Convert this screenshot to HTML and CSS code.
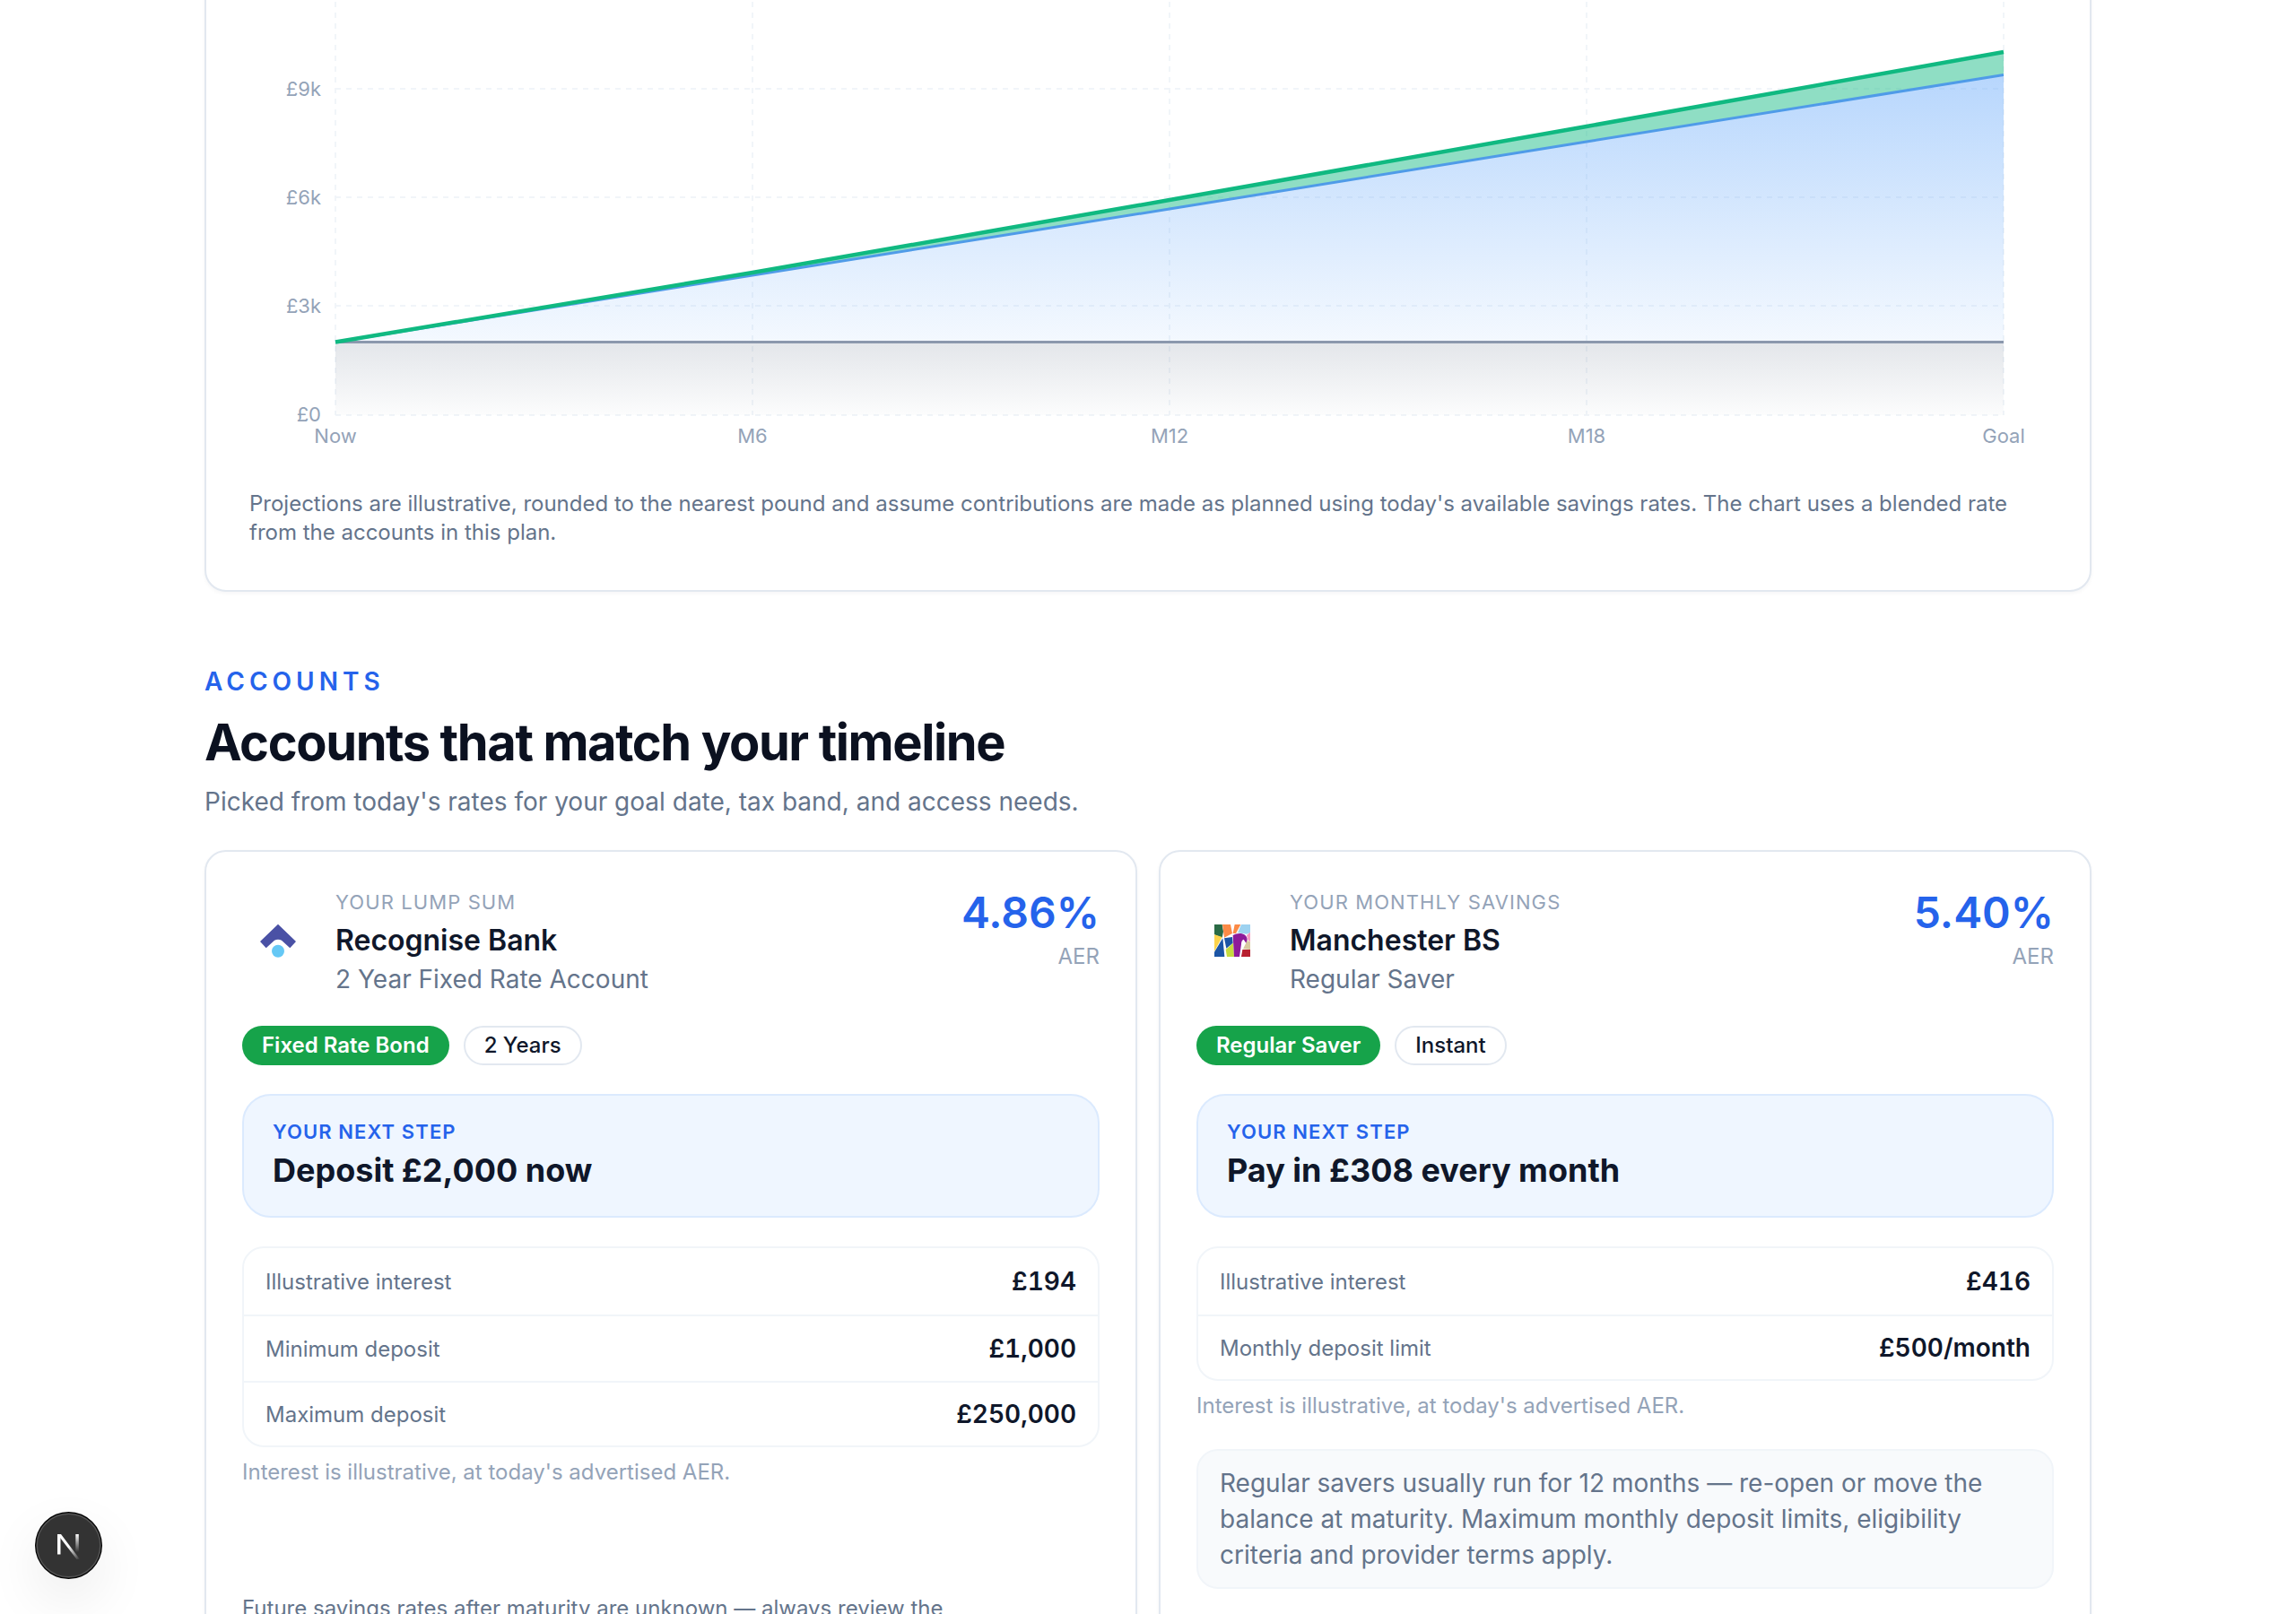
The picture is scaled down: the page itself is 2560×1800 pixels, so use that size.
FILE: index.html
```html
<!DOCTYPE html>
<html lang="en">
<head>
<meta charset="utf-8">
<title>Savings plan</title>
<link rel="stylesheet" href="styles.css">
</head>
<body>
<main class="page">
  <section class="card chart-card">
    <svg class="chart" viewBox="278 -22 2004 532" width="2004" height="532" aria-label="Projection chart">
      <defs>
        <linearGradient id="gBlue" x1="0" y1="0" x2="0" y2="1">
          <stop offset="0" stop-color="#60a5fa" stop-opacity=".45"/>
          <stop offset="1" stop-color="#60a5fa" stop-opacity=".07"/>
        </linearGradient>
        <linearGradient id="gGrey" x1="0" y1="0" x2="0" y2="1">
          <stop offset="0" stop-color="#64748b" stop-opacity=".18"/>
          <stop offset="1" stop-color="#64748b" stop-opacity=".02"/>
        </linearGradient>
      </defs>
      <g class="grid">
        <line x1="374" y1="99" x2="2234" y2="99"/>
        <line x1="374" y1="220" x2="2234" y2="220"/>
        <line x1="374" y1="341" x2="2234" y2="341"/>
        <line x1="374" y1="463" x2="2234" y2="463"/>
        <line x1="374" y1="-22" x2="374" y2="463"/>
        <line x1="839" y1="-22" x2="839" y2="463"/>
        <line x1="1304" y1="-22" x2="1304" y2="463"/>
        <line x1="1769" y1="-22" x2="1769" y2="463"/>
        <line x1="2234" y1="-22" x2="2234" y2="463"/>
      </g>
      <polygon points="374,381.500 2234,381.500 2234,463 374,463" fill="url(#gGrey)"/>
      <polygon points="374,381.500 839,307 1304,233 1769,158 2234,83.500 2234,381.500" fill="url(#gBlue)"/>
      <polygon points="374,381.500 839,304 1304,223 1769,141 2234,58 2234,83.500 1769,158 1304,233 839,307" fill="#10b981" fill-opacity=".47"/>
      <line class="line-grey" x1="374" y1="381.500" x2="2234" y2="381.500"/>
      <polyline class="line-blue" points="374,381.500 839,307 1304,233 1769,158 2234,83.500"/>
      <polyline class="line-green" points="374,381.500 839,304 1304,223 1769,141 2234,58"/>
      <g class="axis axis-y">
        <text x="358" y="107">£9k</text>
        <text x="358" y="228">£6k</text>
        <text x="358" y="349">£3k</text>
        <text x="358" y="470">£0</text>
      </g>
      <g class="axis axis-x">
        <text x="374" y="494">Now</text>
        <text x="839" y="494">M6</text>
        <text x="1304" y="494">M12</text>
        <text x="1769" y="494">M18</text>
        <text x="2234" y="494">Goal</text>
      </g>
    </svg>
    <p class="chart-note">Projections are illustrative, rounded to the nearest pound and assume contributions are made as planned using today's available savings rates. The chart uses a blended rate from the accounts in this plan.</p>
  </section>

  <section class="accounts">
    <header class="section-head">
      <div class="eyebrow">ACCOUNTS</div>
      <h2 class="section-title">Accounts that match your timeline</h2>
      <p class="section-sub">Picked from today's rates for your goal date, tax band, and access needs.</p>
    </header>

    <div class="account-grid">
      <article class="card account">
        <div class="acc-head">
          <div class="logo">
            <svg viewBox="0 0 80 80" width="80" height="80">
              <path d="M40 18.700 60 38 53.300 45.300 44 36.800Q40 34.500 36 36.800L26.700 45.300 20 38Z" fill="#4a51a5"/>
              <circle cx="40" cy="48.700" r="7" fill="#65c8f5"/>
            </svg>
          </div>
          <div class="acc-id">
            <div class="acc-kicker">YOUR LUMP SUM</div>
            <div class="acc-name">Recognise Bank</div>
            <div class="acc-product">2 Year Fixed Rate Account</div>
          </div>
          <div class="acc-rate">
            <div class="rate">4.86%</div>
            <div class="rate-unit">AER</div>
          </div>
        </div>
        <div class="pills">
          <span class="pill pill-green">Fixed Rate Bond</span>
          <span class="pill pill-outline">2 Years</span>
        </div>
        <div class="next">
          <div class="next-label">YOUR NEXT STEP</div>
          <div class="next-value">Deposit £2,000 now</div>
        </div>
        <div class="facts">
          <div class="fact"><span class="fact-k">Illustrative interest</span><span class="fact-v">£194</span></div>
          <div class="fact"><span class="fact-k">Minimum deposit</span><span class="fact-v">£1,000</span></div>
          <div class="fact"><span class="fact-k">Maximum deposit</span><span class="fact-v">£250,000</span></div>
        </div>
        <p class="fine">Interest is illustrative, at today's advertised AER.</p>
        <p class="foot">Future savings rates after maturity are unknown — always review the</p>
      </article>

      <article class="card account">
        <div class="acc-head">
          <div class="logo">
            <svg viewBox="0 0 80 80" width="80" height="80">
              <g transform="translate(20 19) scale(.3333)">
                <polygon points="0,0 26,0 30,24 26,44 0,34" fill="#2a6b45"/>
                <polygon points="0,34 26,42 0,90" fill="#fdd34a"/>
                <polygon points="0,92 28,46 34,108 0,108" fill="#1c55a5"/>
                <polygon points="27,0 54,0 60,30 33,44 30,20" fill="#fb8a46"/>
                <polygon points="68,0 88,0 72,30 62,30" fill="#fb8a46"/>
                <polygon points="90,0 120,0 120,28 108,32 78,28" fill="#9dd2f0"/>
                <polygon points="120,26 108,36 112,52 120,58" fill="#f59ac0"/>
                <polygon points="120,58 110,54 96,82 120,84" fill="#d8c9a0"/>
                <polygon points="94,84 120,84 120,108 90,108" fill="#b81f2f"/>
                <polygon points="33,46 60,42 62,62 40,80" fill="#1c55a5"/>
                <polygon points="38,84 63,62 66,108 42,108" fill="#c6db3f"/>
                <path d="M66 108 62 36C78 26 110 26 110 52L106 62 98 50C92 52 90 58 90 66L84 108Z" fill="#8e1a9a"/>
              </g>
            </svg>
          </div>
          <div class="acc-id">
            <div class="acc-kicker">YOUR MONTHLY SAVINGS</div>
            <div class="acc-name">Manchester BS</div>
            <div class="acc-product">Regular Saver</div>
          </div>
          <div class="acc-rate">
            <div class="rate">5.40%</div>
            <div class="rate-unit">AER</div>
          </div>
        </div>
        <div class="pills">
          <span class="pill pill-green">Regular Saver</span>
          <span class="pill pill-outline">Instant</span>
        </div>
        <div class="next">
          <div class="next-label">YOUR NEXT STEP</div>
          <div class="next-value">Pay in £308 every month</div>
        </div>
        <div class="facts">
          <div class="fact"><span class="fact-k">Illustrative interest</span><span class="fact-v">£416</span></div>
          <div class="fact"><span class="fact-k">Monthly deposit limit</span><span class="fact-v">£500/month</span></div>
        </div>
        <p class="fine">Interest is illustrative, at today's advertised AER.</p>
        <p class="callout">Regular savers usually run for 12 months — re-open or move the balance at maturity. Maximum monthly deposit limits, eligibility criteria and provider terms apply.</p>
      </article>
    </div>
  </section>
</main>

<div class="dev-badge">
  <svg viewBox="0 0 75 75" width="75" height="75" aria-hidden="true">
    <defs>
      <linearGradient id="nDiag" x1="0" y1="0" x2="1" y2="1">
        <stop offset=".5" stop-color="#fff"/>
        <stop offset="1" stop-color="#fff" stop-opacity="0"/>
      </linearGradient>
      <linearGradient id="nStem" x1="0" y1="0" x2="0" y2="1">
        <stop offset="0" stop-color="#fff"/>
        <stop offset="1" stop-color="#fff" stop-opacity="0"/>
      </linearGradient>
    </defs>
    <circle cx="37.500" cy="37.500" r="37.500" fill="#000"/>
    <circle cx="37.500" cy="37.500" r="36.300" fill="#333"/>
    <circle cx="37.500" cy="37.500" r="35.200" fill="none" stroke="#555" stroke-width="1.200"/>
    <rect x="25" y="25" width="3.500" height="22.500" fill="#fff"/>
    <rect x="45.300" y="25" width="3.500" height="20" fill="url(#nStem)"/>
    <polygon points="25,25 29,25 50,53 46.500,53" fill="url(#nDiag)"/>
  </svg>
</div>
</body>
</html>
```

FILE: styles.css
```css
* { box-sizing: border-box; }
html, body { margin: 0; padding: 0; height: 1800px; overflow: hidden; background: #fff; }
body { font-family: Inter, "Liberation Sans", sans-serif; color: #0f172a; position: relative; }

.page { width: 2104px; margin: -72px auto 0; }

.card {
  background: #fff;
  border: 2px solid #e2e8f0;
  border-radius: 24px;
  box-shadow: 0 2px 4px rgba(15, 23, 42, .04);
}

.chart-card { padding: 48px 48px 48px; }
.chart { display: block; }
.grid line { stroke: #f1f5f9; stroke-width: 2; stroke-dasharray: 6 6; }
.line-grey { stroke: #8b98ad; stroke-width: 3; }
.line-blue { fill: none; stroke: #4f9be8; stroke-width: 3; }
.line-green { fill: none; stroke: #10b981; stroke-width: 4.500; }
.axis text { font-size: 22px; fill: #94a3b8; }
.axis-y text { text-anchor: end; }
.axis-x text { text-anchor: middle; }
.chart-note { margin: 36px 0 0; font-size: 24px; line-height: 32px; color: #64748b; }

.accounts { margin-top: 80px; }
.eyebrow { font-size: 28px; line-height: 40px; font-weight: 600; letter-spacing: 5px; color: #2563eb; }
.section-title { margin: 14px 0 0; font-size: 56px; line-height: 68px; font-weight: 700; letter-spacing: -.025em; color: #0b1120; }
.section-sub { margin: 12px 0 0; font-size: 28px; line-height: 40px; color: #64748b; }

.account-grid { display: grid; grid-template-columns: 1fr 1fr; gap: 24px; margin-top: 34px; }
.account { padding: 40px; min-height: 1000px; }

.acc-head { display: flex; align-items: center; gap: 24px; }
.logo { width: 80px; height: 80px; flex: none; }
.logo svg { display: block; }
.acc-id { flex: 1; min-width: 0; }
.acc-kicker { font-size: 22px; line-height: 32px; letter-spacing: .05em; color: #94a3b8; }
.acc-name { margin-top: 5px; font-size: 32px; line-height: 44px; font-weight: 600; color: #0f172a; }
.acc-product { margin-top: -1px; font-size: 28px; line-height: 44px; color: #64748b; }
.acc-rate { align-self: flex-start; text-align: right; }
.rate { font-size: 48px; line-height: 56px; font-weight: 600; color: #2563eb; }
.rate-unit { margin-top: 5px; font-size: 24px; line-height: 32px; color: #94a3b8; }

.pills { display: flex; gap: 16px; margin-top: 30px; }
.pill { height: 44px; padding: 0 22px; border-radius: 22px; font-size: 24px; line-height: 40px; font-weight: 500; }
.pill-green { background: #16a34a; color: #fff; line-height: 44px; font-weight: 600; }
.pill-outline { border: 2px solid #e2e8f0; color: #0f172a; padding: 0 21px; }

.next { margin-top: 32px; height: 138px; padding: 24px 32px; background: #eff6ff; border: 2px solid #dbeafe; border-radius: 32px; }
.next-label { font-size: 22px; line-height: 32px; font-weight: 600; letter-spacing: .05em; color: #2563eb; }
.next-value { margin-top: 5px; font-size: 36px; line-height: 44px; font-weight: 700; color: #0f172a; }

.facts { margin-top: 32px; border: 2px solid #f1f5f9; border-radius: 24px; }
.fact { display: flex; justify-content: space-between; align-items: center; height: 74px; padding: 0 24px; }
.fact + .fact { border-top: 2px solid #f1f5f9; }
.fact:last-child { height: 72px; }
.fact-k { font-size: 24px; color: #64748b; }
.fact-v { font-size: 28px; font-weight: 600; color: #0f172a; font-variant-numeric: tabular-nums; }

.fine { margin: 10px 0 0; font-size: 24px; line-height: 36px; color: #94a3b8; }
.foot { margin: 116px 0 0; font-size: 24px; line-height: 36px; color: #64748b; }
.callout { margin: 30px 0 0; padding: 16px 24px; background: #f8fafc; border: 2px solid #f1f5f9; border-radius: 24px; font-size: 28px; line-height: 40px; color: #64748b; }

.dev-badge { position: absolute; left: 39px; top: 1686px; width: 75px; height: 75px; border-radius: 50%; box-shadow: 0 24px 60px rgba(0, 0, 0, .08); }
.dev-badge svg { display: block; }
```
